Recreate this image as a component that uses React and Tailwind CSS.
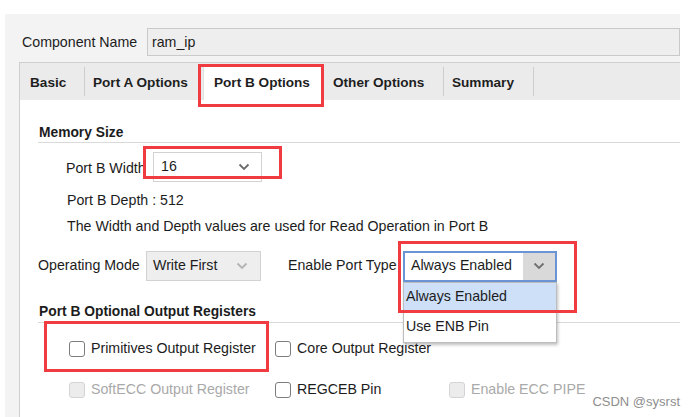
import React from "react";

const Chevron = ({ color = "#6b6b6b" }) => (
  <svg width="12" height="8" viewBox="0 0 12 8" fill="none">
    <path d="M1.5 1.5 L6 6 L10.5 1.5" stroke={color} strokeWidth="1.8" />
  </svg>
);

const Checkbox = ({ disabled }) => (
  <span
    className={
      disabled
        ? "inline-block w-[16px] h-[16px] rounded-[3px] border border-[#d4d4d4] bg-[#ececec]"
        : "inline-block w-[16px] h-[16px] rounded-[3px] border border-[#7d7d7d] bg-white"
    }
  />
);

const CheckItem = ({ label, disabled, w }) => (
  <div className={`flex items-center gap-[6px] ${w}`}>
    <Checkbox disabled={disabled} />
    <span className={disabled ? "text-[#a9a9a9]" : "text-[#1c1c1c]"}>{label}</span>
  </div>
);

export default function App() {
  return (
    <div
      className="relative w-[695px] h-[417px] bg-white overflow-hidden text-[14.2px] text-[#1c1c1c]"
      style={{ fontFamily: '"Liberation Sans", Arial, sans-serif' }}
    >
      <div className="pt-[14px] pl-[5px]">
        <div className="w-[675px] h-[403px] bg-[#f3f3f3] flex flex-col">
          {/* Component name row */}
          <div className="flex items-center pt-[14px] pl-[17px]">
            <span className="w-[125px] pt-[1px]">Component Name</span>
            <div className="flex-1 h-[28px] bg-[#eeeeee] border border-[#c9c9c9] flex items-center pl-[4px] pt-[1px]">
              ram_ip
            </div>
          </div>

          {/* Tab frame */}
          <div className="mt-[6px] ml-[14px] flex-1 flex flex-col border-l border-t border-[#cfcfcf]">
            <div className="h-[37px] bg-[#ebebeb] flex items-stretch font-bold text-[13.6px] text-[#1e1e1e]">
              <div className="w-[64px] pl-[10px] pt-[3px] flex items-center">Basic</div>
              <div className="w-[1px] my-[4px] bg-[#cdcdcd]" />
              <div className="w-[118px] pl-[8px] pt-[3px] flex items-center">Port A Options</div>
              <div className="w-[118px] mt-[3px] pl-[10px] flex items-center bg-white border-l border-[#e2e2e2]">
                Port B Options
              </div>
              <div className="w-[122px] pl-[12px] pt-[3px] flex items-center">Other Options</div>
              <div className="w-[1px] my-[4px] bg-[#cdcdcd]" />
              <div className="w-[89px] pl-[8px] pt-[3px] flex items-center">Summary</div>
              <div className="w-[1px] my-[4px] bg-[#cdcdcd]" />
            </div>

            <div className="flex-1 bg-white pl-[18px] flex flex-col">
              {/* Memory Size */}
              <div className="mt-[22px] h-[21px] pt-[2px] border-b border-[#d9d9d9] flex items-center font-bold text-[13.8px] pl-[1px]">
                Memory Size
              </div>

              <div className="mt-[9px] h-[30px] flex items-center pl-[28px]">
                <span className="w-[87px] pt-[3px]">Port B Width</span>
                <div className="w-[109px] h-[30px] border border-[#d2d2d2] bg-white flex items-center justify-between pl-[7px] pr-[11px]">
                  <span>16</span>
                  <Chevron />
                </div>
              </div>

              <div className="mt-[8px] h-[20px] pt-[1px] flex items-center pl-[29px]">Port B Depth : 512</div>
              <div className="mt-[6px] h-[20px] pt-[1px] flex items-center pl-[29px]">
                The Width and Depth values are used for Read Operation in Port B
              </div>

              <div className="mt-[15px] h-[30px] flex items-center">
                <span className="w-[108px]">Operating Mode</span>
                <div className="w-[115px] h-[30px] border border-[#d2d2d2] bg-[#eeeeee] flex items-center justify-between pl-[6px] pr-[12px]">
                  <span>Write First</span>
                  <Chevron color="#b3b3b3" />
                </div>
                <span className="ml-[27px] w-[115px]">Enable Port Type</span>
                <div className="relative w-[154px] h-[31px] border-2 border-[#6a94d4] bg-white flex items-stretch">
                  <span className="flex-1 flex items-center pl-[6px]">Always Enabled</span>
                  <span className="w-[32px] bg-[#d9d9d9] flex items-center justify-center">
                    <Chevron color="#6f6f6f" />
                  </span>
                  {/* dropdown list */}
                  <div className="absolute left-[-2px] top-[29px] w-[154px] bg-white border border-[#bdbdbd] shadow-[1px_2px_3px_rgba(0,0,0,0.25)] z-10">
                    <div className="h-[29px] bg-[#cde0f8] flex items-center pl-[2px]">Always Enabled</div>
                    <div className="h-[30px] flex items-center pl-[2px]">Use ENB Pin</div>
                  </div>
                </div>
              </div>

              {/* Optional output registers */}
              <div className="mt-[21px] h-[21px] pt-[1px] border-b border-[#d9d9d9] flex items-center font-bold text-[13.8px] pl-[1px]">
                Port B Optional Output Registers
              </div>

              <div className="mt-[16px] h-[20px] flex items-center pl-[31px]">
                <CheckItem label="Primitives Output Register" w="w-[206px]" />
                <CheckItem label="Core Output Register" w="w-[174px]" />
              </div>
              <div className="mt-[21px] h-[20px] flex items-center pl-[31px]">
                <CheckItem label="SoftECC Output Register" disabled w="w-[206px]" />
                <CheckItem label="REGCEB Pin" w="w-[174px]" />
                <CheckItem label="Enable ECC PIPE" disabled w="w-[160px]" />
              </div>
            </div>
          </div>
        </div>
      </div>

      {/* red annotation boxes */}
      <div className="absolute left-[198px] top-[64px] w-[126px] h-[43px] border-[3px] border-[#f03c41] pointer-events-none" />
      <div className="absolute left-[143px] top-[146px] w-[139px] h-[33px] border-[3px] border-[#f03c41] pointer-events-none" />
      <div className="absolute left-[398px] top-[241px] w-[179px] h-[72px] border-[3px] border-[#f03c41] pointer-events-none z-20" />
      <div className="absolute left-[44px] top-[321px] w-[225px] h-[51px] border-[3px] border-[#f03c41] pointer-events-none" />

      {/* watermark */}
      <div className="absolute right-[15px] top-[392px] text-[13px] text-[#8e8e8e]">CSDN @sysrst</div>
    </div>
  );
}
